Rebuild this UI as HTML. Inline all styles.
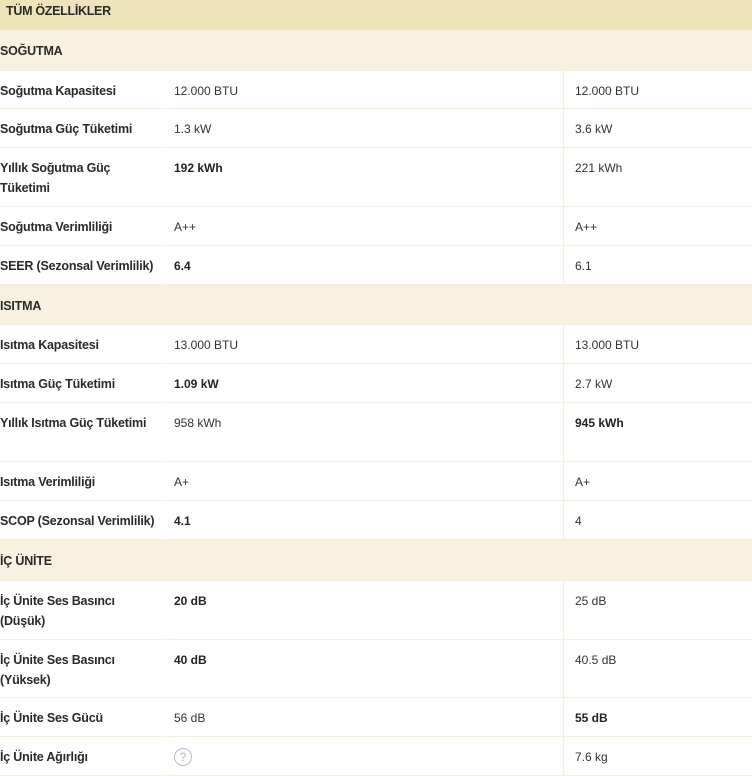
<!DOCTYPE html>
<html><head><meta charset="utf-8"><style>
*{margin:0;padding:0;box-sizing:border-box}
body{width:752px;height:759px;overflow:hidden;background:#fff;font-family:"Liberation Sans",sans-serif;color:#222}
.hdr{height:30px;background:#efe3bb;font-size:12.5px;font-weight:bold;padding:1px 0 0 6px;line-height:20px;color:#2a2a2a;letter-spacing:-0.3px}
.sec{height:41px;background:#f8f1df;font-size:12.5px;font-weight:bold;line-height:42px;color:#2a2a2a;letter-spacing:-0.2px}
.row{display:flex;position:relative}
.row>div{border-bottom:1px solid #f3eedd;padding-top:10px;line-height:20px}
.l{width:164px;font-size:12.5px;font-weight:bold;color:#2a2a2a;letter-spacing:-0.2px;white-space:nowrap}
.v{width:398px;margin-left:2px;padding-left:8px;font-size:12px;color:#333;border-right:1px solid #f3eedd}
.w{flex:1;padding-left:11px;font-size:12px;color:#333}
b{color:#222}
.q{display:inline-block;width:18px;height:18px;border:1px solid #bbb;border-radius:50%;text-align:center;line-height:16px;color:#bbb;font-size:12px}
</style></head><body>
<div class="hdr">TÜM ÖZELLİKLER</div>
<div class="sec">SOĞUTMA</div>
<div class="row" style="height:38px"><div class="l">Soğutma Kapasitesi</div><div class="v">12.000 BTU</div><div class="w">12.000 BTU</div></div>
<div class="row" style="height:39px"><div class="l">Soğutma Güç Tüketimi</div><div class="v">1.3 kW</div><div class="w">3.6 kW</div></div>
<div class="row" style="height:59px"><div class="l">Yıllık Soğutma Güç<br>Tüketimi</div><div class="v"><b>192 kWh</b></div><div class="w">221 kWh</div></div>
<div class="row" style="height:39px"><div class="l">Soğutma Verimliliği</div><div class="v">A++</div><div class="w">A++</div></div>
<div class="row" style="height:39px"><div class="l">SEER (Sezonsal Verimlilik)</div><div class="v"><b>6.4</b></div><div class="w">6.1</div></div>
<div class="sec" style="height:40px">ISITMA</div>
<div class="row" style="height:39px"><div class="l">Isıtma Kapasitesi</div><div class="v">13.000 BTU</div><div class="w">13.000 BTU</div></div>
<div class="row" style="height:39px"><div class="l">Isıtma Güç Tüketimi</div><div class="v"><b>1.09 kW</b></div><div class="w">2.7 kW</div></div>
<div class="row" style="height:59px"><div class="l">Yıllık Isıtma Güç Tüketimi</div><div class="v">958 kWh</div><div class="w"><b>945 kWh</b></div></div>
<div class="row" style="height:39px"><div class="l">Isıtma Verimliliği</div><div class="v">A+</div><div class="w">A+</div></div>
<div class="row" style="height:39px"><div class="l">SCOP (Sezonsal Verimlilik)</div><div class="v"><b>4.1</b></div><div class="w">4</div></div>
<div class="sec">İÇ ÜNİTE</div>
<div class="row" style="height:59px"><div class="l">İç Ünite Ses Basıncı<br>(Düşük)</div><div class="v"><b>20 dB</b></div><div class="w">25 dB</div></div>
<div class="row" style="height:58px"><div class="l">İç Ünite Ses Basıncı<br>(Yüksek)</div><div class="v"><b>40 dB</b></div><div class="w">40.5 dB</div></div>
<div class="row" style="height:39px"><div class="l">İç Ünite Ses Gücü</div><div class="v">56 dB</div><div class="w"><b>55 dB</b></div></div>
<div class="row" style="height:39px"><div class="l">İç Ünite Ağırlığı</div><div class="v"><span class="q">?</span></div><div class="w">7.6 kg</div></div>
</body></html>
